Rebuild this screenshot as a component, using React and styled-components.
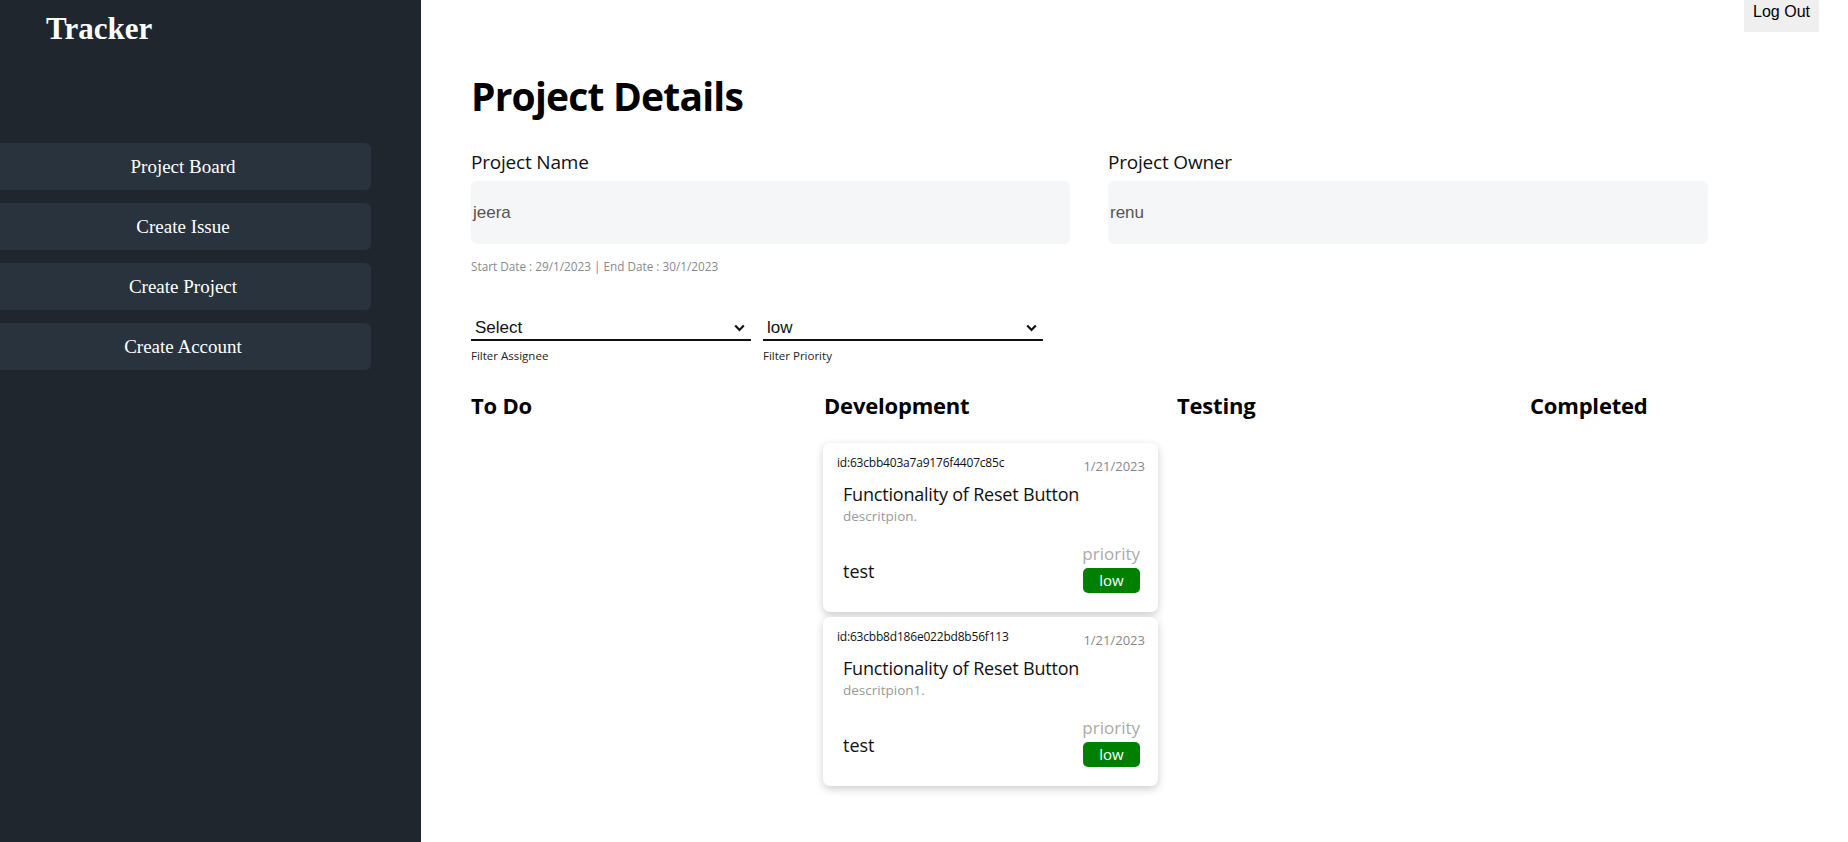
import React from "react";
import styled, { createGlobalStyle } from "styled-components";

const GlobalStyle = createGlobalStyle`
  html, body { margin: 0; padding: 0; background: #ffffff; overflow: hidden; }
  body { font-family: "Open Sans", "Noto Sans", sans-serif; color: #111; }
  * { box-sizing: border-box; }
`;

const Layout = styled.div`
  display: flex;
  width: 1848px;
  min-height: 842px;
`;

const Sidebar = styled.aside`
  width: 421px;
  flex: 0 0 421px;
  background: #1f262d;
  padding: 0 50px 0 0;
  display: flex;
  flex-direction: column;
`;

const Brand = styled.h1`
  margin: 0;
  padding: 12px 0 0 46px;
  font-family: "Liberation Serif", "Times New Roman", serif;
  font-weight: 700;
  font-size: 31px;
  line-height: 34px;
  color: #ffffff;
`;

const Nav = styled.nav`
  display: flex;
  flex-direction: column;
  gap: 13px;
  margin-top: 97px;
`;

const NavButton = styled.button`
  height: 47px;
  width: 371px;
  border: none;
  border-radius: 0 6px 6px 0;
  background: #29333d;
  color: #ffffff;
  font-family: "Liberation Serif", "Times New Roman", serif;
  font-size: 19px;
  padding: 0 5px 0 0;
  text-align: center;
  cursor: pointer;
`;

const Main = styled.main`
  flex: 1;
  min-width: 0;
  display: flex;
  flex-direction: column;
`;

const TopBar = styled.div`
  display: flex;
  justify-content: flex-end;
  padding-right: 29px;
`;

const LogOut = styled.button`
  height: 32px;
  padding: 2px 9px 10px;
  border: none;
  background: #efefef;
  font-family: "Liberation Sans", Arial, sans-serif;
  font-size: 16px;
  color: #000;
  line-height: 20px;
`;

const Content = styled.section`
  padding: 0 0 0 50px;
`;

const Title = styled.h2`
  margin: 43px 0 0;
  font-size: 39px;
  line-height: 42px;
  font-weight: 700;
  letter-spacing: -0.8px;
  color: #000;
`;

const FieldGrid = styled.div`
  display: grid;
  grid-template-columns: 599px 600px;
  column-gap: 38px;
  margin-top: 33px;
`;

const Field = styled.div`
  display: flex;
  flex-direction: column;
`;

const Label = styled.label`
  font-size: 19px;
  line-height: 24px;
  color: #111;
  margin-bottom: 7px;
  letter-spacing: -0.2px;
`;

const ValueBox = styled.div`
  height: 63px;
  background: #f5f6f8;
  border-radius: 6px;
  padding-left: 2px;
  display: flex;
  align-items: center;
  font-family: "Liberation Sans", Arial, sans-serif;
  font-size: 17px;
  color: #555;
`;

const DateLine = styled.p`
  margin: 14px 0 0;
  font-size: 11.75px;
  line-height: 16px;
  color: #8a8a8a;
`;

const Filters = styled.div`
  display: flex;
  gap: 12px;
  margin-top: 42px;
`;

const FilterGroup = styled.div`
  width: 280px;
  display: flex;
  flex-direction: column;
`;

const SelectWrap = styled.div`
  position: relative;
  height: 24px;
`;

const Select = styled.select`
  appearance: none;
  -webkit-appearance: none;
  width: 100%;
  height: 24px;
  border: none;
  border-bottom: 2px solid #111;
  border-radius: 0;
  background: transparent;
  font-family: "Liberation Sans", Arial, sans-serif;
  font-size: 17px;
  color: #111;
  padding: 0 0 0 4px;
  outline: none;
`;

const Chevron = styled.svg`
  position: absolute;
  right: 6px;
  top: 8px;
  width: 11px;
  height: 8px;
  pointer-events: none;
`;

const FilterLabel = styled.span`
  margin-top: 8px;
  font-size: 11.5px;
  line-height: 16px;
  color: #222;
`;

const Board = styled.div`
  display: grid;
  grid-template-columns: repeat(3, 353px) 1fr;
  margin-top: 26px;
`;

const Column = styled.div`
  display: flex;
  flex-direction: column;
`;

const ColumnTitle = styled.h3`
  margin: 0 0 23px;
  font-size: 22px;
  line-height: 30px;
  font-weight: 700;
  color: #000;
  letter-spacing: -0.2px;
`;

const CardList = styled.div`
  display: flex;
  flex-direction: column;
  gap: 5px;
  margin-left: -1px;
`;

const Card = styled.article`
  width: 335px;
  height: 169px;
  background: #fff;
  border-radius: 7px;
  box-shadow: 0 3px 9px rgba(0, 0, 0, 0.2);
  padding: 10px 13px 19px 14px;
  display: flex;
  flex-direction: column;
`;

const CardHead = styled.div`
  display: flex;
  justify-content: space-between;
  align-items: flex-end;
  height: 22px;
`;

const IssueId = styled.span`
  font-size: 12px;
  line-height: 16px;
  color: #111;
  letter-spacing: -0.2px;
  margin-bottom: 4px;
`;

const IssueDate = styled.span`
  font-size: 13px;
  line-height: 18px;
  color: #888;
`;

const CardBody = styled.div`
  flex: 1;
  padding-left: 6px;
  display: flex;
  flex-direction: column;
`;

const IssueTitle = styled.div`
  font-size: 18px;
  line-height: 24px;
  color: #111;
  margin-top: 7px;
  letter-spacing: -0.2px;
`;

const IssueDesc = styled.div`
  font-size: 13.5px;
  line-height: 18px;
  color: #999;
  margin-top: 1px;
`;

const CardFoot = styled.div`
  display: flex;
  justify-content: space-between;
  align-items: flex-end;
  margin-top: auto;
  padding-right: 5px;
`;

const Assignee = styled.span`
  font-size: 18px;
  line-height: 24px;
  color: #111;
  margin-bottom: 10px;
`;

const PriorityCol = styled.div`
  display: flex;
  flex-direction: column;
  align-items: flex-end;
`;

const PriorityLabel = styled.span`
  font-size: 17px;
  line-height: 22px;
  color: #aaa;
  margin-bottom: 3px;
`;

const Badge = styled.span`
  width: 57px;
  height: 25px;
  border-radius: 5px;
  background: ${(p) => p.$color};
  color: #fff;
  font-size: 15px;
  line-height: 25px;
  text-align: center;
`;

const issues = [
  { id: "63cbb403a7a9176f4407c85c", desc: "descritpion." },
  { id: "63cbb8d186e022bd8b56f113", desc: "descritpion1." },
];

const columns = ["To Do", "Development", "Testing", "Completed"];

function ChevronIcon() {
  return (
    <Chevron viewBox="0 0 11 8">
      <path d="M1.2 1.5 L5.5 6 L9.8 1.5" fill="none" stroke="#111" strokeWidth="2.2" />
    </Chevron>
  );
}

export default function App() {
  return (
    <>
      <GlobalStyle />
      <Layout>
        <Sidebar>
          <Brand>Tracker</Brand>
          <Nav>
            <NavButton>Project Board</NavButton>
            <NavButton>Create Issue</NavButton>
            <NavButton>Create Project</NavButton>
            <NavButton>Create Account</NavButton>
          </Nav>
        </Sidebar>
        <Main>
          <TopBar>
            <LogOut>Log Out</LogOut>
          </TopBar>
          <Content>
            <Title>Project Details</Title>
            <FieldGrid>
              <Field>
                <Label>Project Name</Label>
                <ValueBox>jeera</ValueBox>
                <DateLine>Start Date : 29/1/2023 | End Date : 30/1/2023</DateLine>
              </Field>
              <Field>
                <Label>Project Owner</Label>
                <ValueBox>renu</ValueBox>
              </Field>
            </FieldGrid>
            <Filters>
              <FilterGroup>
                <SelectWrap>
                  <Select defaultValue="">
                    <option value="">Select</option>
                  </Select>
                  <ChevronIcon />
                </SelectWrap>
                <FilterLabel>Filter Assignee</FilterLabel>
              </FilterGroup>
              <FilterGroup>
                <SelectWrap>
                  <Select defaultValue="low">
                    <option value="low">low</option>
                  </Select>
                  <ChevronIcon />
                </SelectWrap>
                <FilterLabel>Filter Priority</FilterLabel>
              </FilterGroup>
            </Filters>
            <Board>
              {columns.map((c) => (
                <Column key={c}>
                  <ColumnTitle>{c}</ColumnTitle>
                  {c === "Development" && (
                    <CardList>
                      {issues.map((it) => (
                        <Card key={it.id}>
                          <CardHead>
                            <IssueId>id:{it.id}</IssueId>
                            <IssueDate>1/21/2023</IssueDate>
                          </CardHead>
                          <CardBody>
                            <IssueTitle>Functionality of Reset Button</IssueTitle>
                            <IssueDesc>{it.desc}</IssueDesc>
                            <CardFoot>
                              <Assignee>test</Assignee>
                              <PriorityCol>
                                <PriorityLabel>priority</PriorityLabel>
                                <Badge $color="#008000">low</Badge>
                              </PriorityCol>
                            </CardFoot>
                          </CardBody>
                        </Card>
                      ))}
                    </CardList>
                  )}
                </Column>
              ))}
            </Board>
          </Content>
        </Main>
      </Layout>
    </>
  );
}
